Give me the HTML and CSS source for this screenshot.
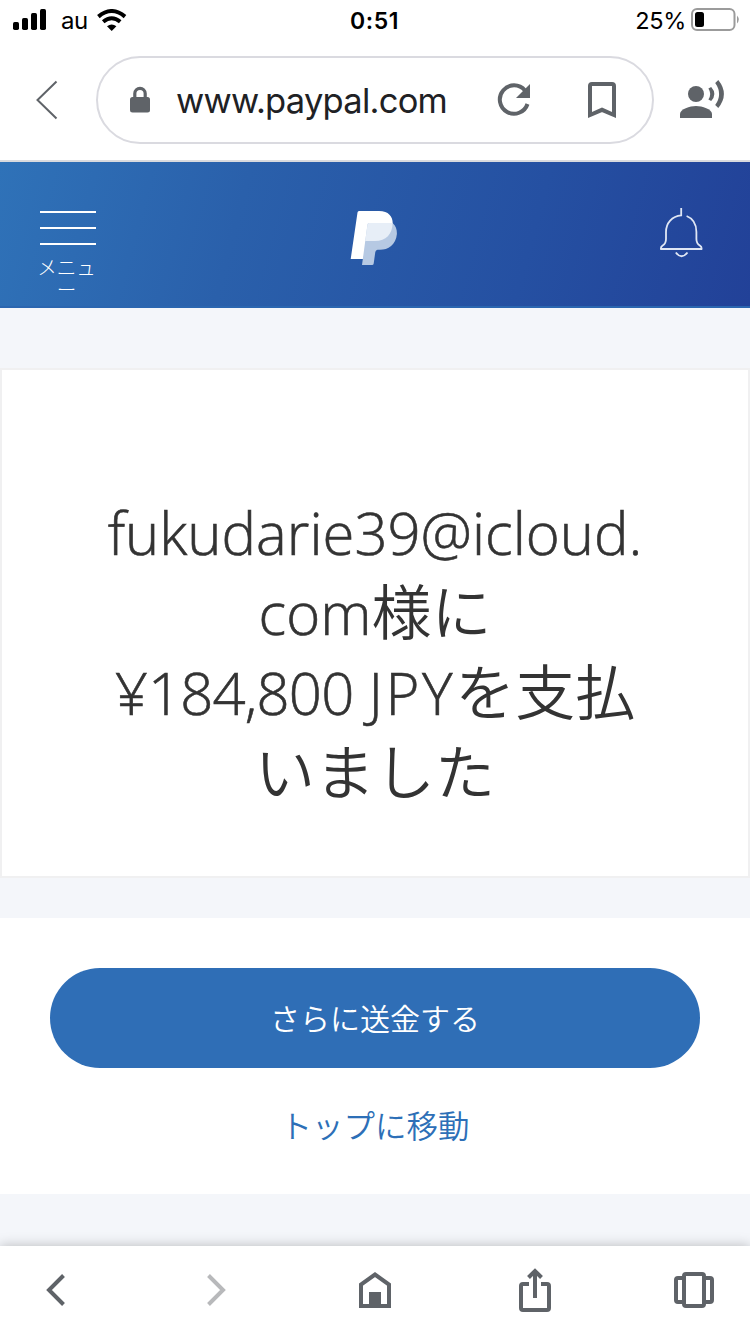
FILE: index.html
```html
<!DOCTYPE html>
<html lang="ja">
<head>
<meta charset="utf-8">
<title>PayPal</title>
<link rel="stylesheet" href="styles.css">
</head>
<body>
<div class="status">
  <div class="status-side">
    <svg class="signal" width="34" height="22" viewBox="13 9 34 22"><rect x="13" y="22" width="6" height="8" rx="1.7"/><rect x="22" y="18" width="6" height="12" rx="1.7"/><rect x="31" y="13" width="6" height="17" rx="1.7"/><rect x="40" y="9" width="6" height="21" rx="1.7"/></svg>
    <span class="carrier">au</span>
    <svg class="wifi" width="30" height="22" viewBox="97 9 30 22"><path d="M98.4 16.6Q111.700 5.500 125 16.600M103.200 21.700Q111.700 14.800 120.200 21.700" fill="none" stroke="#000" stroke-width="4"/><path d="M107 26.200Q111.700 22.800 116.400 26.200L111.700 31Z"/></svg>
  </div>
  <div class="time">0:51</div>
  <div class="status-side status-right">
    <span class="percent">25%</span>
    <svg width="50" height="24" viewBox="690 8 50 24"><rect x="692" y="9" width="42.500" height="21" rx="5" fill="none" stroke="#9b9b9b" stroke-width="2"/><rect x="695" y="12" width="9" height="15" rx="2.500"/><path d="M737 15.500Q740.500 19.500 737 23.500Z" fill="#9b9b9b"/></svg>
  </div>
</div>
<div class="address-row">
  <svg class="addr-back" width="30" height="44" viewBox="32 78 30 44"><path d="M56.500 81.500L37.500 100L56.500 118.500" class="line thin"/></svg>
  <div class="address">
    <svg class="lock" width="22" height="28" viewBox="129 86 22 28"><rect x="130" y="97" width="20" height="15.500" rx="2.500" class="solid"/><path d="M134.800 98V93.500A5.200 5.200 0 0 1 145.200 93.500V98" class="line lock-bow"/></svg>
    <span class="url">www.paypal.com</span>
    <svg class="reload" width="36" height="36" viewBox="496 82 36 36"><path d="M525 90.500A14.200 14.200 0 1 0 527.500 104" class="line"/><path d="M530 84V98H516Z" class="solid"/></svg>
    <svg class="bookmark" width="30" height="38" viewBox="587 81 30 38"><path d="M590 115V86Q590 84 592 84H612Q614 84 614 86V115L602 109.800Z" class="line"/></svg>
  </div>
  <svg class="voice" width="46" height="42" viewBox="679 79 46 42"><circle cx="696" cy="94" r="8" class="solid"/><path d="M680 118V114C680 109 690 106 696 106S712 109 712 114V118Z" class="solid"/><path d="M708.400 99.500L711.200 101Q717.500 94 711.200 87L708.400 88.500Q712 94 708.400 99.500ZM715.200 105L718.300 108Q729.500 94 718.300 80L715.200 83Q723 94 715.200 105Z" class="solid"/></svg>
</div>
<header class="header">
  <div class="menu">
    <svg width="56" height="34" viewBox="0 0 56 34"><path d="M0 1H56M0 17H56M0 33H56" stroke="#fff" stroke-width="2"/></svg>
    <span class="menu-label">メニュー</span>
  </div>
  <svg class="logo" width="48" height="56" viewBox="350 210 48 56"><path d="M359 211H379C389 211 393 217 392.700 224C392 235 385 241 375 241H366.500L363.500 259H350.700L357.500 212.500Q357.700 211 359 211Z" fill="#fff"/><path d="M369 223H392.600C396 226 397 230 396.900 234C396 245 388 249.800 380 249.800H377.500Q375.700 250 375.300 252L373.700 263.500Q373.500 265 372 265H362L367.500 224.500Q367.700 223 369 223Z" fill="#b6c9e3"/><path d="M369 223H392.600C392.500 234 386 241 375 241H365.200L367.500 224.500Q367.700 223 369 223Z" fill="#e7eef7"/></svg>
  <svg class="bell" width="46" height="52" viewBox="658 207 46 52"><path d="M681.200 208V215.300C672 216 666 223 666 232V239Q666 243.500 662.700 245.500Q660.500 247 661 249H701.500Q702 247 699.800 245.500Q696.400 243.500 696.400 239V232C696.400 224 693 218.500 686.600 216M675.800 252.500Q681.500 260 687.500 252.500" fill="none" stroke="#dfe6f4" stroke-width="1.800"/></svg>
</header>
<main>
  <section class="card">
    <h1 class="message">
      <span class="row">fukudarie39@icloud.</span>
      <span class="row">com<span class="jp">様に</span></span>
      <span class="row">¥<span class="amount">184,800</span> <span class="currency">JPY</span><span class="jp">を支払</span></span>
      <span class="row"><span class="jp">いました</span></span>
    </h1>
  </section>
  <section class="actions">
    <a class="primary">さらに送金する</a>
    <a class="secondary">トップに移動</a>
  </section>
</main>
<nav class="toolbar">
  <svg width="44" height="48" viewBox="34 1266 44 48"><path d="M63.500 1275.500L49 1290L63.500 1304.500" class="line"/></svg>
  <svg width="44" height="48" viewBox="194 1266 44 48"><path d="M208.500 1275.500L223 1290L208.500 1304.500" class="line muted"/></svg>
  <svg width="44" height="48" viewBox="353 1266 44 48"><path d="M361 1306V1284.500L375 1274.500L389 1284.500V1306Z" class="line"/><path d="M369 1292H381V1307H369Z" class="solid"/></svg>
  <svg width="44" height="48" viewBox="513 1266 44 48"><path d="M529 1284H523Q521 1284 521 1286V1308Q521 1310 523 1310H547Q549 1310 549 1308V1286Q549 1284 547 1284H541M535 1298V1271M528.500 1277.500L535 1271L541.500 1277.500" class="line"/></svg>
  <svg width="44" height="48" viewBox="672 1266 44 48"><rect x="684" y="1274" width="20" height="32" rx="2" class="line"/><path d="M683 1278H678Q676 1278 676 1280V1300Q676 1302 678 1302H683M705 1278H710Q712 1278 712 1280V1300Q712 1302 710 1302H705" class="line"/></svg>
</nav>
</body>
</html>
```
FILE: styles.css
```css
* { box-sizing: border-box; }
body {
  margin: 0;
  width: 750px;
  height: 1334px;
  overflow: hidden;
  display: flex;
  flex-direction: column;
  background: #f4f6fa;
  font-family: Inter, "Noto Sans CJK JP", sans-serif;
}
svg { display: block; flex: none; }
.line { fill: none; stroke: #5f6368; stroke-width: 4; }
.thin { stroke-width: 2; }
.lock-bow { stroke-width: 3.2; }
.solid { fill: #5f6368; }
.muted { stroke: #b8b9bb; }

.status {
  height: 40px;
  display: flex;
  align-items: center;
  background: #fff;
  padding: 0 10px 0 13px;
  font-size: 24px;
  line-height: 40px;
  color: #000;
}
.status-side { flex: 1; display: flex; align-items: center; }
.status-right { justify-content: flex-end; }
.carrier { margin: 2px 9px 0 14px; letter-spacing: -0.5px; }
.time { font-size: 23px; font-weight: 600; letter-spacing: 0.6px; margin: 2px 4px 0 0; }
.percent { font-size: 23.500px; margin: 2px 4px 0 0; letter-spacing: -0.3px; }

.address-row {
  height: 122px;
  display: flex;
  align-items: center;
  background: #fff;
  border-bottom: 2px solid #d9dade;
  padding: 0 25px 0 32px;
}
.address {
  width: 558px;
  height: 88px;
  margin: 0 25px 0 34px;
  padding: 0 35px 0 31px;
  border: 2px solid #dadae0;
  border-radius: 44px;
  display: flex;
  align-items: center;
}
.url {
  flex: 1;
  margin-left: 25px;
  font-size: 34.500px;
  letter-spacing: -0.75px;
  color: #202124;
  white-space: nowrap;
}
.bookmark { margin-left: 55px; }

.header {
  height: 146px;
  flex: none;
  display: flex;
  align-items: flex-start;
  padding: 0 46px 0 37px;
  background: linear-gradient(105deg, #2f72b8 0%, #2a60ab 32%, #2550a2 70%, #224198 100%);
  border-bottom: 2px solid #2b66b0;
}
.menu { width: 60px; margin-top: 49px; display: flex; flex-direction: column; }
.menu svg { margin-left: 3px; }
.menu-label {
  margin-top: 11px;
  padding-right: 1px;
  color: #fff;
  font: 300 19.500px/22px "Noto Sans CJK JP", sans-serif;
  text-align: center;
  word-break: break-all;
  line-break: anywhere;
}
.logo { margin: 48px 0 0 253px; }
.bell { margin: 45px 0 0 auto; }

.card {
  height: 510px;
  margin-top: 60px;
  padding: 123px 0 0;
  background: #fff;
  border: 2px solid #f0f0f1;
}
.message {
  margin: 0;
  text-align: center;
  color: #333;
  font: 300 58px/80px "Open Sans", sans-serif;
  -webkit-text-stroke: 0.6px #333;
  white-space: nowrap;
}
.row { display: block; height: 80px; }
.amount { letter-spacing: -0.8px; }
.currency { letter-spacing: 2.6px; }
.jp { font: 350 60px/0 "Noto Sans CJK JP", sans-serif; -webkit-text-stroke: 0; }

.actions {
  height: 276px;
  margin-top: 40px;
  padding: 50px 50px 0;
  background: #fff;
  display: flex;
  flex-direction: column;
}
.primary {
  height: 100px;
  border-radius: 50px;
  background: #2f6eb6;
  color: #fff;
  text-align: center;
  font: 350 30px/98px "Noto Sans CJK JP", sans-serif;
}
.secondary {
  margin-top: 32px;
  color: #2d6fb7;
  text-align: center;
  font: 350 31.500px/48px "Noto Sans CJK JP", sans-serif;
}

.toolbar {
  height: 88px;
  flex: none;
  margin-top: auto;
  padding: 0 34px;
  background: #fff;
  box-shadow: 0 0 12px rgba(0, 0, 0, 0.25);
  display: flex;
  align-items: center;
  justify-content: space-between;
}
```
